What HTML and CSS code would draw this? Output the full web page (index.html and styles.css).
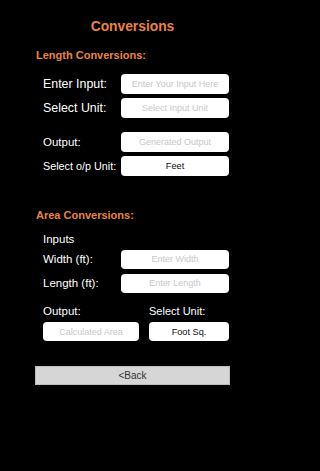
FILE: index.html
```html
<!DOCTYPE html>
<html>
<head>
<meta charset="utf-8">
<link rel="stylesheet" href="styles.css">
</head>
<body>
<div class="screen">
  <h1 class="title">Conversions</h1>

  <h2 class="section-title">Length Conversions:</h2>
  <div class="group">
    <div class="row">
      <span class="label big">Enter Input:</span>
      <div class="field placeholder">Enter Your Input Here</div>
    </div>
    <div class="row">
      <span class="label big">Select Unit:</span>
      <div class="field placeholder">Select Input Unit</div>
    </div>
  </div>
  <div class="group group-out">
    <div class="row">
      <span class="label mid">Output:</span>
      <div class="field placeholder">Generated Output</div>
    </div>
    <div class="row">
      <span class="label small">Select o/p Unit:</span>
      <div class="field value">Feet</div>
    </div>
  </div>

  <h2 class="section-title area-title">Area Conversions:</h2>
  <div class="inputs-label">Inputs</div>
  <div class="group group-area">
    <div class="row">
      <span class="label mid">Width (ft):</span>
      <div class="field placeholder">Enter Width</div>
    </div>
    <div class="row">
      <span class="label mid">Length (ft):</span>
      <div class="field placeholder">Enter Length</div>
    </div>
  </div>
  <div class="area-out">
    <div class="col col-left">
      <span class="label mid">Output:</span>
      <div class="field placeholder wide">Calculated Area</div>
    </div>
    <div class="col col-right">
      <span class="label mid sm2">Select Unit:</span>
      <div class="field value narrow">Foot Sq.</div>
    </div>
  </div>

  <div class="back">&lt;Back</div>
</div>
</body>
</html>
```

FILE: styles.css
```css
html, body {
  margin: 0;
  padding: 0;
  background: #000;
}
body {
  width: 265px;
  height: 471px;
  font-family: "Liberation Sans", Arial, sans-serif;
  color: #fff;
}
.screen {
  display: flex;
  flex-direction: column;
  padding-top: 18px;
}
.title {
  margin: 0;
  text-align: center;
  font-size: 13.8px;
  line-height: 18px;
  font-weight: bold;
  color: #ea8442;
}
.section-title {
  margin: 11px 0 0 36px;
  font-size: 11px;
  line-height: 16px;
  font-weight: bold;
  color: #ea8442;
}
.group {
  display: flex;
  flex-direction: column;
  gap: 4px;
  margin-left: 43px;
  width: 186px;
}
.section-title + .group {
  margin-top: 11px;
}
.group-out {
  margin-top: 14px;
}
.row {
  display: flex;
  align-items: center;
  justify-content: space-between;
  height: 20px;
}
.label {
  white-space: nowrap;
  color: #fff;
}
.big { font-size: 12.4px; }
.mid { font-size: 11.5px; }
.small { font-size: 10.8px; }
.sm2 { font-size: 11px; }
.field {
  box-sizing: border-box;
  height: 20px;
  width: 108px;
  background: #fff;
  border-radius: 4px;
  display: flex;
  align-items: center;
  justify-content: center;
  font-size: 9px;
  white-space: nowrap;
}
.placeholder { color: #c7c7cc; }
.value { color: #111; font-size: 9.2px; }
.area-title {
  margin-top: 31px;
}
.inputs-label {
  margin: 8px 0 0 43px;
  font-size: 11.5px;
  line-height: 16px;
}
.group-area {
  margin-top: 2px;
}
.group-area .field {
  height: 19px;
}
.area-out {
  display: flex;
  margin: 10px 0 0 43px;
  width: 186px;
  gap: 10px;
}
.col {
  display: flex;
  flex-direction: column;
  gap: 3px;
}
.col .label {
  line-height: 16px;
}
.field.wide {
  width: 96px;
  height: 19px;
}
.field.narrow {
  width: 80px;
  height: 19px;
}
.back {
  box-sizing: border-box;
  margin: 25px 0 0 35px;
  width: 195px;
  height: 19px;
  background: #d6d6d6;
  border: 1px solid #bdbdbd;
  display: flex;
  align-items: center;
  justify-content: center;
  font-size: 10px;
  color: #333;
}
```
